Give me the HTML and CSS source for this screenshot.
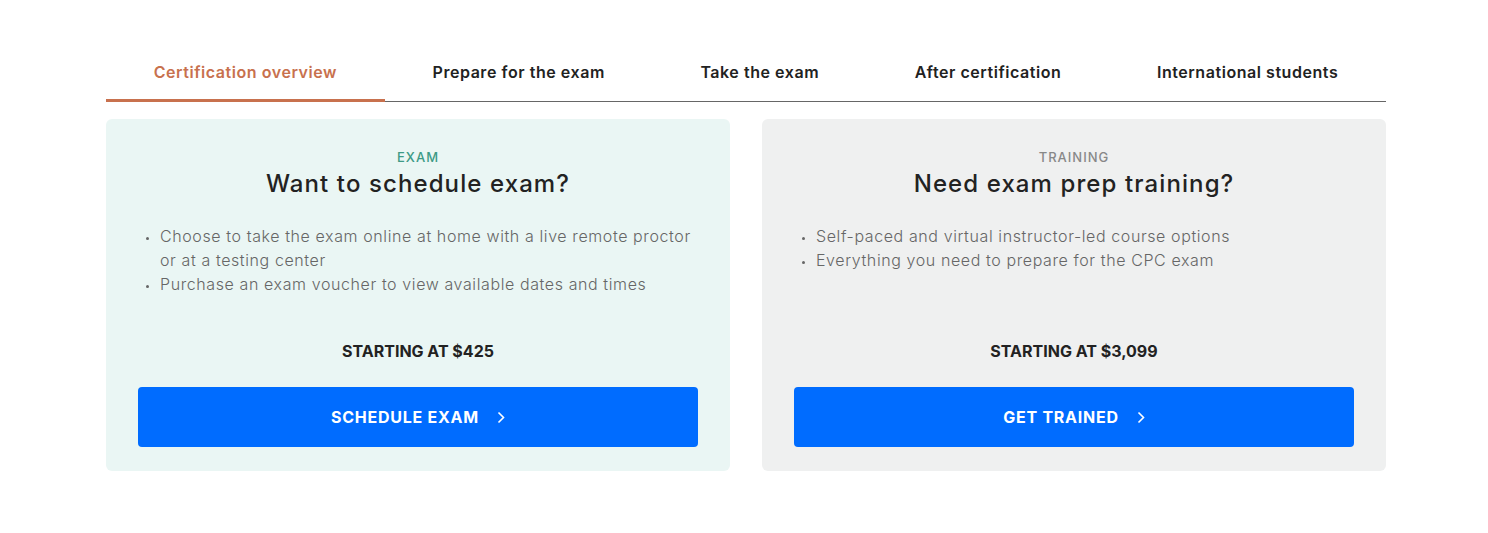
FILE: index.html
```html
<!DOCTYPE html>
<html lang="en">
<head>
    <meta charset="UTF-8">
    <meta name="viewport" content="width=device-width, initial-scale=1.0">
    <title>CPC Certification</title>
    <link rel="stylesheet" href="styles.css">
</head>
<body>
    <div class="page">
        <nav class="tabs">
            <a class="tab active" href="#">Certification overview</a>
            <a class="tab" href="#">Prepare for the exam</a>
            <a class="tab" href="#">Take the exam</a>
            <a class="tab" href="#">After certification</a>
            <a class="tab" href="#">International students</a>
        </nav>

        <div class="cards">
            <div class="card card-exam">
                <div class="eyebrow">EXAM</div>
                <h2>Want to schedule exam?</h2>
                <ul class="points">
                    <li>Choose to take the exam online at home with a live remote proctor or at a testing center</li>
                    <li>Purchase an exam voucher to view available dates and times</li>
                </ul>
                <div class="price">STARTING AT $425</div>
                <a class="btn" href="#">SCHEDULE EXAM
                    <svg width="8" height="13" viewBox="0 0 8 13"><path d="M1.5 1.5 6.5 6.5 1.5 11.5" fill="none" stroke="currentColor" stroke-width="1.6"/></svg>
                </a>
            </div>

            <div class="card card-training">
                <div class="eyebrow">TRAINING</div>
                <h2>Need exam prep training?</h2>
                <ul class="points">
                    <li>Self-paced and virtual instructor-led course options</li>
                    <li>Everything you need to prepare for the CPC exam</li>
                </ul>
                <div class="price">STARTING AT $3,099</div>
                <a class="btn" href="#">GET TRAINED
                    <svg width="8" height="13" viewBox="0 0 8 13"><path d="M1.5 1.5 6.5 6.5 1.5 11.5" fill="none" stroke="currentColor" stroke-width="1.6"/></svg>
                </a>
            </div>
        </div>
    </div>
</body>
</html>
```

FILE: styles.css
```css
* {
    margin: 0;
    padding: 0;
    box-sizing: border-box;
}

body {
    background: #fff;
    color: #222;
    font-family: 'Inter', sans-serif;
}

.page {
    width: 1280px;
    margin-left: 106px;
    padding-top: 46px;
}

.tabs {
    display: flex;
    border-bottom: 1px solid #666;
}

.tab {
    display: block;
    padding: 16px 36px 17px;
    margin-bottom: -1px;
    border-bottom: 3px solid transparent;
    font-size: 16px;
    line-height: 20px;
    font-weight: 600;
    letter-spacing: 0.55px;
    white-space: nowrap;
    color: #222;
    text-decoration: none;
    text-align: center;
    flex: 1 1 auto;
}

.tab.active {
    color: #c8714e;
    border-bottom-color: #c8714e;
}

.cards {
    display: grid;
    grid-template-columns: 1fr 1fr;
    gap: 32px;
    margin-top: 17px;
}

.card {
    display: flex;
    flex-direction: column;
    padding: 30px 32px 24px;
    border-radius: 6px;
    text-align: center;
}

.card-exam {
    background: #eaf6f4;
}

.card-training {
    background: #eff0f0;
}

.eyebrow {
    font-size: 13px;
    line-height: 16px;
    font-weight: 500;
    letter-spacing: 1px;
    color: #888;
}

.card-exam .eyebrow {
    color: #3d9a86;
}

h2 {
    margin-top: 4px;
    font-size: 24px;
    line-height: 30px;
    font-weight: 500;
    letter-spacing: 1.1px;
    color: #222;
}

.points {
    list-style: none;
    flex: 1;
    margin: 25px 0 45px;
    text-align: left;
}

.points li {
    display: flex;
    font-size: 16px;
    line-height: 24px;
    font-weight: 300;
    letter-spacing: 0.6px;
    color: #666;
}

.points li::before {
    content: "";
    flex-shrink: 0;
    width: 3px;
    height: 3px;
    margin: 13px 11px 0 8px;
    border-radius: 50%;
    background: #666;
}

.price {
    font-size: 16px;
    line-height: 20px;
    font-weight: 700;
    color: #222;
}

.btn {
    display: flex;
    align-items: center;
    justify-content: center;
    gap: 18px;
    height: 60px;
    margin-top: 26px;
    border-radius: 4px;
    background: #006cff;
    color: #fff;
    font-size: 16px;
    font-weight: 700;
    letter-spacing: 0.75px;
    text-decoration: none;
}
```
